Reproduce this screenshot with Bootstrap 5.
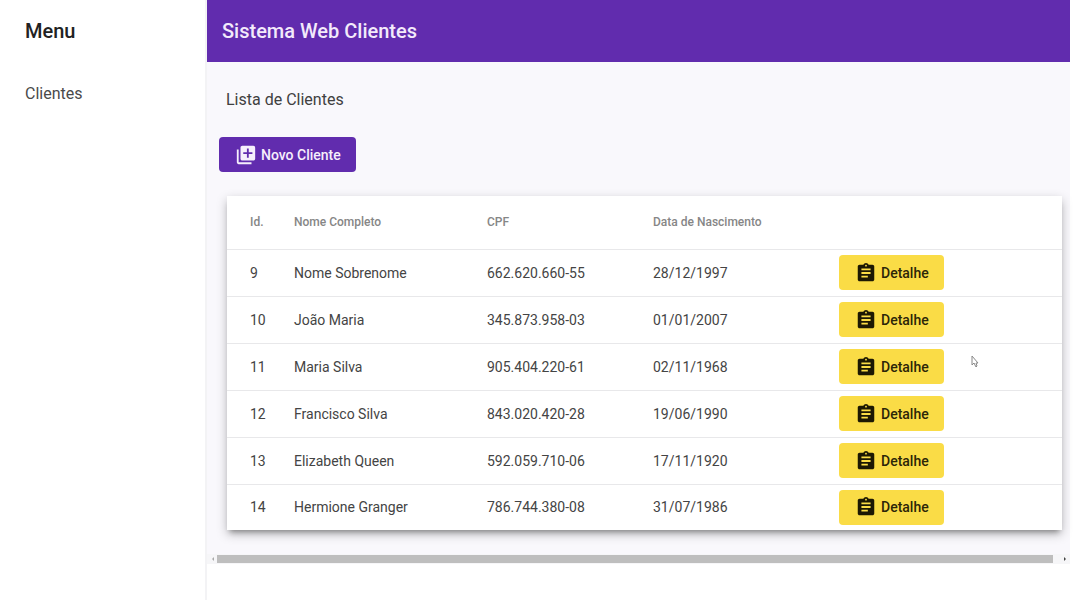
<!DOCTYPE html>
<html lang="pt-BR">
<head>
<meta charset="utf-8">
<meta name="viewport" content="width=device-width, initial-scale=1">
<title>Sistema Web Clientes</title>
<link href="https://cdn.jsdelivr.net/npm/bootstrap@5.3.0/dist/css/bootstrap.min.css" rel="stylesheet">
<style>
  body { font-family: Roboto, "Liberation Sans", sans-serif; font-size: 14px; line-height: 20px; color: #3a3a3a; background: #fff; }
  .side-menu { width: 207px; border-right: 2px solid #f3f3f5; }
  .bar-title { height: 62px; font-size: 20px; line-height: 24px; font-weight: 500; }
  .side-menu .bar-title { color: #222; padding-left: 25px; }
  .side-link { font-size: 16px; line-height: 24px; padding: 20px 25px; color: #4a4a4a; text-decoration: none; }
  .app-main { min-width: 0; padding-right: 10px; }
  .top-bar { background: #612cae; color: #f3eafb; padding-left: 15px; }
  .page-area { background: #f9f8fc; padding: 24px 8px 24px 12px; }
  .page-title { font-size: 16px; line-height: 28px; margin: 0 0 23px 7px; color: #404040; font-weight: 400; }
  .btn-app { height: 35px; border: 0; border-radius: 4px; font-size: 14px; line-height: 20px; font-weight: 500; padding: 0 15px 0 16px; gap: 4px; }
  .btn-app svg { width: 22px; height: 22px; fill: currentColor; }
  .btn-new { --bs-btn-color: #f6effc; --bs-btn-bg: #612cae; --bs-btn-hover-bg: #5424a0; --bs-btn-hover-color: #fff; }
  .btn-detail { --bs-btn-color: #2c2608; --bs-btn-bg: #fadc46; --bs-btn-hover-bg: #efd036; --bs-btn-hover-color: #2c2608; }
  .btn-detail svg { fill: #1c1803; }
  .client-card { margin: 24px 0 0 8px; background: #fff; box-shadow: 0 5px 5px -3px rgba(0,0,0,.3), 0 4px 10px rgba(0,0,0,.26); }
  .client-table { table-layout: fixed; color: #444; }
  .client-table th { height: 53px; font-size: 12px; line-height: 16px; font-weight: 500; color: #868686; }
  .client-table td { height: 47px; color: inherit; }
  .client-table th, .client-table td { padding: 0; vertical-align: middle; border-bottom: 1px solid #e8e8ea; }
  .client-table tr:last-child td { height: 46px; }
  .client-table tbody tr:last-child td { border-bottom: 0; }
  .client-table th:first-child, .client-table td:first-child { padding-left: 23px; }
  .c-id { width: 67px; } .c-name { width: 193px; } .c-cpf { width: 166px; } .c-date { width: 186px; }
  .scroll-strip { height: 10px; padding: 0 3px 0 4px; background: #f6f6f8; gap: 2px; }
  .scroll-strip svg { width: 4px; height: 6px; }
  .scroll-thumb { height: 8px; background: #bebebe; margin-right: 8px; }
  .pointer { position: absolute; left: 971px; top: 355px; width: 8px; height: 13px; pointer-events: none; }
</style>
</head>
<body>
<svg class="d-none">
  <symbol id="i-add" viewBox="0 0 24 24"><path d="M4 6H2v14c0 1.1.9 2 2 2h14v-2H4V6zm16-4H8c-1.1 0-2 .9-2 2v12c0 1.1.9 2 2 2h12c1.1 0 2-.9 2-2V4c0-1.1-.9-2-2-2zm-1 9h-4v4h-2v-4H9V9h4V5h2v4h4v2z"/></symbol>
  <symbol id="i-task" viewBox="0 0 24 24"><path d="M19 3h-4.180C14.4 1.84 13.3 1 12 1c-1.3 0-2.4.84-2.82 2H5c-1.1 0-2 .9-2 2v14c0 1.1.9 2 2 2h14c1.1 0 2-.9 2-2V5c0-1.1-.9-2-2-2zm-7 0c.55 0 1 .45 1 1s-.45 1-1 1-1-.45-1-1 .45-1 1-1zm2 14H7v-2h7v2zm3-4H7v-2h10v2zm0-4H7V7h10v2z"/></symbol>
</svg>
<div class="d-flex min-vh-100">
  <nav class="side-menu flex-shrink-0" aria-label="Menu">
    <h2 class="bar-title d-flex align-items-center m-0">Menu</h2>
    <a class="side-link d-block" href="#">Clientes</a>
  </nav>
  <main class="app-main flex-grow-1">
    <header class="top-bar">
      <h1 class="bar-title d-flex align-items-center m-0">Sistema Web Clientes</h1>
    </header>
    <section class="page-area">
      <h2 class="page-title">Lista de Clientes</h2>
      <button type="button" class="btn btn-app btn-new d-flex align-items-center"><svg aria-hidden="true"><use href="#i-add"/></svg>Novo Cliente</button>
      <div class="client-card">
        <table class="table client-table mb-0">
          <colgroup><col class="c-id"><col class="c-name"><col class="c-cpf"><col class="c-date"><col></colgroup>
          <thead><tr><th>Id.</th><th>Nome Completo</th><th>CPF</th><th>Data de Nascimento</th><th></th></tr></thead>
          <tbody>
            <tr><td>9</td><td>Nome Sobrenome</td><td>662.620.660-55</td><td>28/12/1997</td><td><button type="button" class="btn btn-app btn-detail d-flex align-items-center"><svg aria-hidden="true"><use href="#i-task"/></svg>Detalhe</button></td></tr>
            <tr><td>10</td><td>João Maria</td><td>345.873.958-03</td><td>01/01/2007</td><td><button type="button" class="btn btn-app btn-detail d-flex align-items-center"><svg aria-hidden="true"><use href="#i-task"/></svg>Detalhe</button></td></tr>
            <tr><td>11</td><td>Maria Silva</td><td>905.404.220-61</td><td>02/11/1968</td><td><button type="button" class="btn btn-app btn-detail d-flex align-items-center"><svg aria-hidden="true"><use href="#i-task"/></svg>Detalhe</button></td></tr>
            <tr><td>12</td><td>Francisco Silva</td><td>843.020.420-28</td><td>19/06/1990</td><td><button type="button" class="btn btn-app btn-detail d-flex align-items-center"><svg aria-hidden="true"><use href="#i-task"/></svg>Detalhe</button></td></tr>
            <tr><td>13</td><td>Elizabeth Queen</td><td>592.059.710-06</td><td>17/11/1920</td><td><button type="button" class="btn btn-app btn-detail d-flex align-items-center"><svg aria-hidden="true"><use href="#i-task"/></svg>Detalhe</button></td></tr>
            <tr><td>14</td><td>Hermione Granger</td><td>786.744.380-08</td><td>31/07/1986</td><td><button type="button" class="btn btn-app btn-detail d-flex align-items-center"><svg aria-hidden="true"><use href="#i-task"/></svg>Detalhe</button></td></tr>
          </tbody>
        </table>
      </div>
    </section>
    <div class="scroll-strip d-flex align-items-center" aria-hidden="true">
      <svg viewBox="0 0 4 6"><path d="M3 1v4L1 3z" fill="#aaa"/></svg>
      <div class="scroll-thumb flex-grow-1"></div>
      <svg viewBox="0 0 4 6"><path d="M1 1v4l2-2z" fill="#444"/></svg>
    </div>
  </main>
</div>
<svg class="pointer" viewBox="0 0 8 13" aria-hidden="true"><path d="M1 1v9l2-2 2 4 1-1-1-3h2z" fill="#fff" stroke="#888"/></svg>
<script src="https://cdn.jsdelivr.net/npm/bootstrap@5.3.0/dist/js/bootstrap.bundle.min.js"></script>
</body>
</html>
